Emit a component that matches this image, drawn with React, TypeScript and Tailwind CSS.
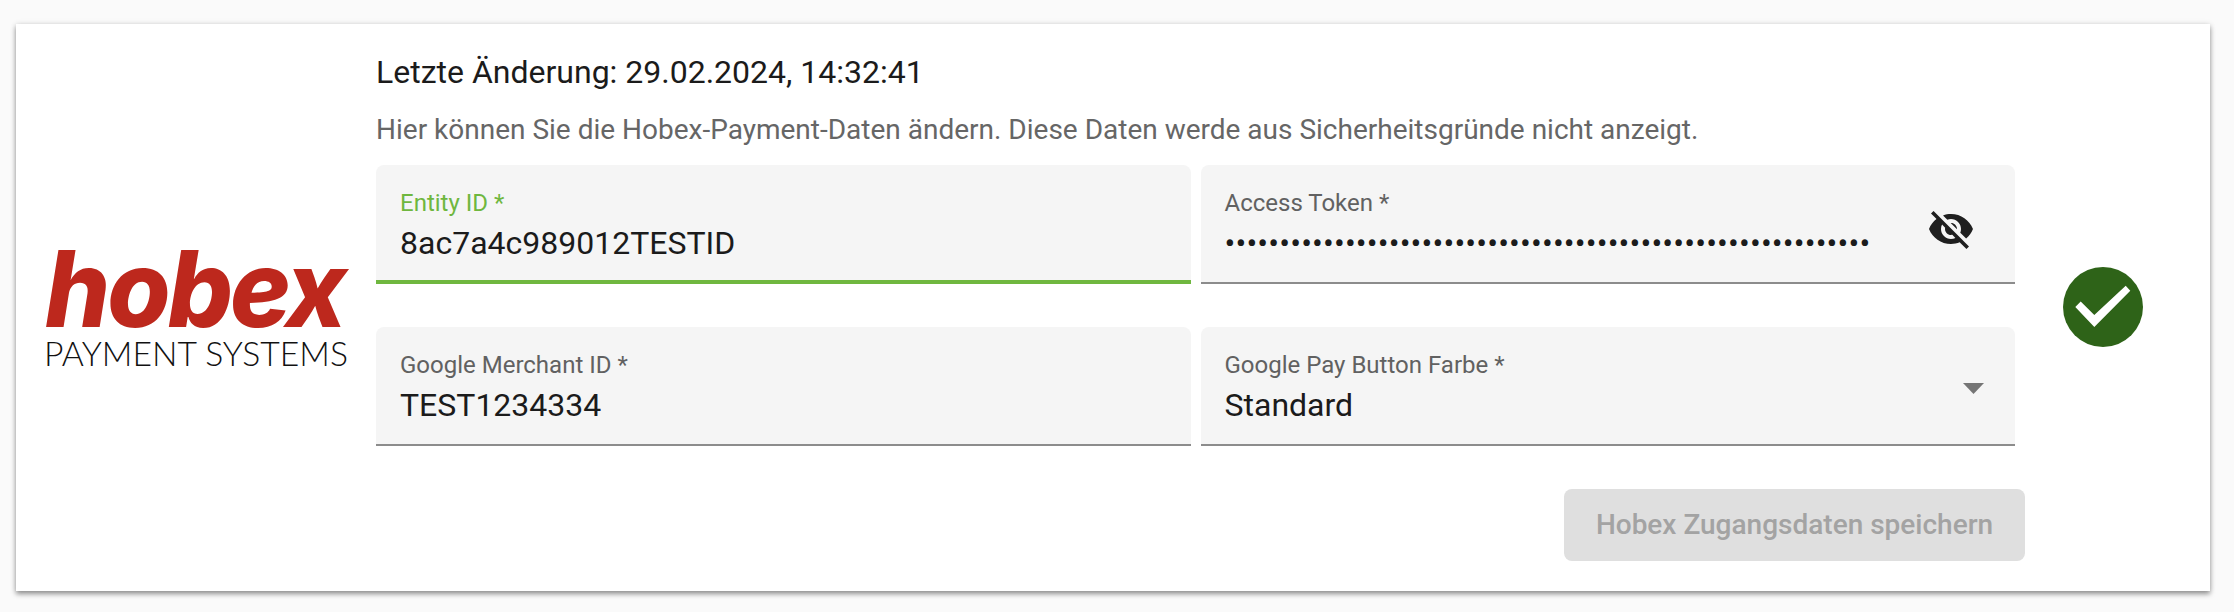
const roboto = "font-['Roboto',sans-serif]";

function Field({ label, value, active, children }: { label: string; value?: string; active?: boolean; children?: React.ReactNode }) {
  return (
    <div className={`relative h-[119px] rounded-t-[8px] bg-[#f5f5f5] px-[24px] pt-[24px] ${active ? "border-b-[4px] border-[#6fb73f]" : "border-b-[2px] border-[#8c8c8c]"}`}>
      <div className={`text-[24px] leading-[28px] ${active ? "text-[#6fb73f]" : "text-[#616161]"}`}>{label}</div>
      {value && <div className="text-[32px] leading-[36px] mt-[8px] text-[#1b1b1b]">{value}</div>}
      {children}
    </div>
  );
}

export default function App() {
  return (
    <div className={`min-h-[612px] bg-[#fafafa] pt-[24px] px-[16px] ${roboto}`} style={{ width: 2234 }}>
      <div className="flex h-[567px] w-[2194px] bg-white shadow-[0_3px_5px_rgba(0,0,0,0.4),0_0_6px_rgba(0,0,0,0.1)]">
        <div className="w-[360px] shrink-0 flex flex-col items-start justify-center pl-[30px]">
          <svg width="302" height="124" viewBox="0 0 302 124" className="block overflow-visible">
            <text x="-1" y="81" fontFamily="'Inter', sans-serif" fontWeight="800" fontStyle="italic" fontSize="106" letterSpacing="-3" fill="#bd281d" textLength="299" lengthAdjust="spacingAndGlyphs">hobex</text>
            <text x="-2" y="120" fontFamily="'Lato', sans-serif" fontWeight="300" fontSize="33" fill="#111111" textLength="304" lengthAdjust="spacingAndGlyphs">PAYMENT SYSTEMS</text>
          </svg>
        </div>
        <div className="w-[1649px] shrink-0 pt-[32px]">
          <div className="text-[32px] leading-[36px] text-[#1b1b1b] mt-[-2px]">Letzte Änderung: 29.02.2024, 14:32:41</div>
          <div className="text-[28px] leading-[32px] text-[#666666] mt-[24px]">Hier können Sie die Hobex-Payment-Daten ändern. Diese Daten werde aus Sicherheitsgründe nicht anzeigt.</div>
          <div className="grid grid-cols-2 gap-x-[10px] gap-y-[43px] w-[1639px] mt-[19px]">
            <Field label="Entity ID *" value="8ac7a4c989012TESTID" active />
            <Field label="Access Token *">
              <div className="text-[32px] leading-[36px] mt-[8px] text-[#1b1b1b] tracking-[0.15px] whitespace-nowrap">{"•".repeat(59)}</div>
              <svg className="absolute right-[40px] top-[40px]" width="48" height="48" viewBox="0 0 24 24" fill="#1f1f1f">
                <path d="M12 7c2.76 0 5 2.24 5 5 0 .65-.13 1.26-.36 1.83l2.92 2.92c1.51-1.26 2.7-2.89 3.43-4.75-1.73-4.39-6-7.5-11-7.5-1.4 0-2.74.25-3.98.7l2.16 2.16C10.74 7.13 11.35 7 12 7zM2 4.27l2.28 2.28.46.46C3.08 8.3 1.78 10.02 1 12c1.73 4.39 6 7.5 11 7.5 1.55 0 3.03-.3 4.38-.84l.42.42L19.73 22 21 20.73 3.27 3 2 4.27zM7.53 9.8l1.55 1.55c-.05.21-.08.43-.08.65 0 1.66 1.34 3 3 3 .22 0 .44-.03.65-.08l1.55 1.55c-.67.33-1.41.53-2.2.53-2.76 0-5-2.24-5-5 0-.79.2-1.53.53-2.2zm4.31-.78l3.15 3.15.02-.16c0-1.66-1.34-3-3-3l-.17.01z" />
              </svg>
            </Field>
            <Field label="Google Merchant ID *" value="TEST1234334" />
            <Field label="Google Pay Button Farbe *" value="Standard">
              <svg className="absolute right-[31px] top-[56px]" width="21" height="11" viewBox="0 0 21 11"><path d="M0 0h21L10.5 11z" fill="#757575" /></svg>
            </Field>
          </div>
          <div className="flex justify-end mt-[43px]">
            <button className="w-[461px] h-[72px] rounded-[8px] bg-[#dfdfdf] text-[#a3a3a3] text-[28px] font-medium">Hobex Zugangsdaten speichern</button>
          </div>
        </div>
        <div className="flex-1 flex items-center pl-[38px] pb-[1px]">
          <svg width="80" height="80" viewBox="0 0 80 80">
            <circle cx="40" cy="40" r="40" fill="#2e6318" />
            <path d="M12.3 40L17.7 34.5L31.3 48L62.7 18.7L67.3 23.7L31.3 60Z" fill="#ffffff" />
          </svg>
        </div>
      </div>
    </div>
  );
}
